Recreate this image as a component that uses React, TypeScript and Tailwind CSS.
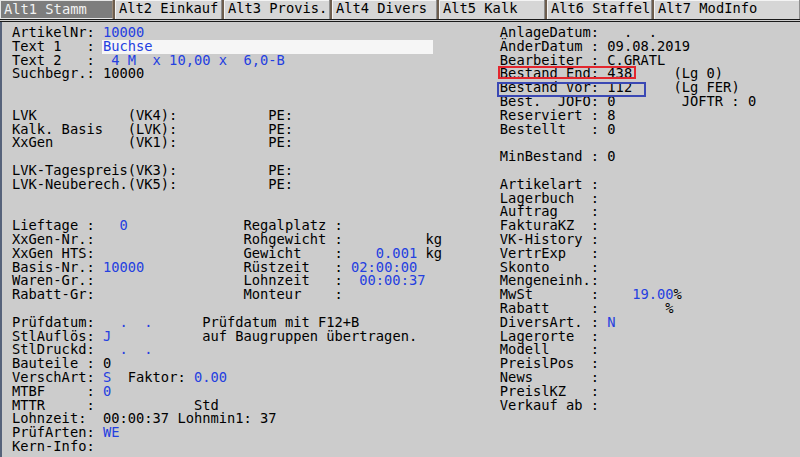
import React from 'react';

const V = ({ children }: { children: React.ReactNode }) => (
  <span className="text-[#2440e0]">{children}</span>
);

const tabs = [
  { label: 'Alt1 Stamm', w: 'w-[113px]', active: true },
  { label: 'Alt2 Einkauf', w: 'w-[109px]' },
  { label: 'Alt3 Provis.', w: 'w-[108px]' },
  { label: 'Alt4 Divers', w: 'w-[107px]' },
  { label: 'Alt5 Kalk', w: 'w-[108px]' },
  { label: 'Alt6 Staffel', w: 'w-[107px]' },
  { label: 'Alt7 ModInfo', w: 'flex-1' },
];

const rows: [React.ReactNode, React.ReactNode][] = [
  [<>{'ArtikelNr: '}<V>10000</V></>, <>{'AnlageDatum:   .  .'}</>],
  [
    <>
      {'Text 1   : '}
      <span className="inline-block w-[40ch] bg-[#f6f6f6] text-[#2440e0] -ml-px pl-px">Buchse</span>
    </>,
    <>{'ÄnderDatum : 09.08.2019'}</>,
  ],
  [<>{'Text 2   : '}<V>{' 4 M  x 10,00 x  6,0-B'}</V></>, <>{'Bearbeiter : C.GRATL'}</>],
  [
    <>{'Suchbegr.: 10000'}</>,
    <>
      <span className="relative inline-block">
        Bestand End: 438
        <span className="absolute -left-[2px] -right-[4px] -top-[1px] bottom-[2px] border-2 border-[#e3262e]" />
      </span>
      {'     (Lg 0)'}
    </>,
  ],
  [
    '',
    <>
      <span className="relative inline-block">
        Bestand Vor: 112
        <span className="absolute -left-[3px] -right-[14px] top-[1px] -bottom-[2px] border-2 border-[#3a48b4]" />
      </span>
      {'     (Lg FER)'}
    </>,
  ],
  ['', <>{'Best.  JOFO: 0        JOFTR : 0'}</>],
  [<>{'LVK           (VK4):           PE:'}</>, <>{'Reserviert : 8'}</>],
  [<>{'Kalk. Basis   (LVK):           PE:'}</>, <>{'Bestellt   : 0'}</>],
  [<>{'XxGen         (VK1):           PE:'}</>, ''],
  ['', <>{'MinBestand : 0'}</>],
  [<>{'LVK-Tagespreis(VK3):           PE:'}</>, ''],
  [<>{'LVK-Neuberech.(VK5):           PE:'}</>, <>{'Artikelart :'}</>],
  ['', <>{'Lagerbuch  :'}</>],
  ['', <>{'Auftrag    :'}</>],
  [<>{'Lieftage :   '}<V>0</V>{'              Regalplatz :'}</>, <>{'FakturaKZ  :'}</>],
  [<>{'XxGen-Nr.:                  Rohgewicht :          kg'}</>, <>{'VK-History :'}</>],
  [<>{'XxGen HTS:                  Gewicht    :    '}<V>0.001</V>{' kg'}</>, <>{'VertrExp   :'}</>],
  [<>{'Basis-Nr.: '}<V>10000</V>{'            Rüstzeit   : '}<V>02:00:00</V></>, <>{'Skonto     :'}</>],
  [<>{'Waren-Gr.:                  Lohnzeit   :  '}<V>00:00:37</V></>, <>{'Mengeneinh.:'}</>],
  [<>{'Rabatt-Gr:                  Monteur    :'}</>, <>{'MwSt       :    '}<V>19.00</V>%</>],
  ['', <>{'Rabatt     :        %'}</>],
  [
    <>{'Prüfdatum:   '}<V>.</V>{'  '}<V>.</V>{'      Prüfdatum mit F12+B'}</>,
    <>{'DiversArt. : '}<V>N</V></>,
  ],
  [<>{'StlAuflös: '}<V>J</V>{'           auf Baugruppen übertragen.'}</>, <>{'Lagerorte  :'}</>],
  [<>{'StlDruckd:   '}<V>.</V>{'  '}<V>.</V></>, <>{'Modell     :'}</>],
  [<>{'Bauteile : 0'}</>, <>{'PreislPos  :'}</>],
  [<>{'VerschArt: '}<V>S</V>{'  Faktor: '}<V>0.00</V></>, <>{'News       :'}</>],
  [<>{'MTBF     : '}<V>0</V></>, <>{'PreislKZ   :'}</>],
  [<>{'MTTR     :            Std'}</>, <>{'Verkauf ab :'}</>],
  [<>{'Lohnzeit:  00:00:37 Lohnmin1: 37'}</>, ''],
  [<>{'PrüfArten: '}<V>WE</V></>, ''],
  [<>{'Kern-Info:'}</>, ''],
];

export default function App() {
  return (
    <div
      className="w-[800px] h-[457px] overflow-hidden bg-[#cccccc] text-black text-[13.74px] leading-[13.8px] flex flex-col"
      style={{ fontFamily: '"DejaVu Sans Mono", "Liberation Mono", monospace' }}
    >
      <div className="flex h-[19px] shrink-0">
        {tabs.map((t) => (
          <div
            key={t.label}
            className={
              t.active
                ? `${t.w} shrink-0 bg-[#7d7d7d] text-[#f2f2f2] border border-[#e6e6e6] border-r-[#9a8a78] pl-[3px] pt-[2px] whitespace-pre`
                : `${t.w} shrink-0 bg-[#d6d6d6] border-l-2 border-l-[#6e5e4e] shadow-[inset_1px_0_#f4f4f4,inset_0_1px_#f4f4f4] border-r border-r-[#8c8c8c] pl-[4px] pt-[2px] whitespace-pre`
            }
          >
            {t.label}
          </div>
        ))}
      </div>
      <div className="h-[3px] shrink-0 border-y border-[#1a1a1a] bg-[#cfcfcf]" />
      <div className="flex-1 border-l-2 border-[#56627a] pl-[10px] pt-[4px] whitespace-pre">
        {rows.map(([l, r], i) => (
          <div key={i} className="flex h-[13.8px]">
            <div className="w-[59ch] shrink-0">{l}</div>
            <div>{r}</div>
          </div>
        ))}
      </div>
    </div>
  );
}
